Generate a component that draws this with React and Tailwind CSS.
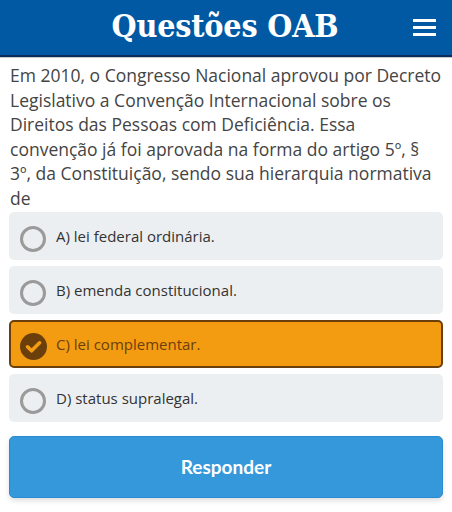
import React from "react";

const options = [
  { letter: "A", text: "lei federal ordinária." },
  { letter: "B", text: "emenda constitucional." },
  { letter: "C", text: "lei complementar.", selected: true },
  { letter: "D", text: "status supralegal." },
];

function Radio() {
  return (
    <div className="w-[26px] h-[26px] shrink-0 rounded-full border-[3.5px] border-[#9a9a9a]" />
  );
}

function Checked() {
  return (
    <svg width="27" height="27" viewBox="0 0 27 27" className="shrink-0">
      <circle cx="13.5" cy="13.5" r="13.5" fill="#6b3f0c" />
      <path d="M7.5 13.8 L11.6 17.8 L19.6 9.8" fill="none" stroke="#f39c12" strokeWidth="3.6" strokeLinecap="round" strokeLinejoin="round" />
    </svg>
  );
}

export default function App() {
  return (
    <div className="w-[452px] h-[512px] bg-white overflow-hidden" style={{ fontFamily: '"Open Sans", sans-serif' }}>
      <header className="h-[57px] bg-[#0059a2] border-b-[2px] border-[#0b2d5e] flex items-center justify-center relative">
        <h1 className="text-white font-bold text-[32px] leading-none tracking-[-0.2px] mt-[-3px] ml-[-2px]" style={{ fontFamily: '"DejaVu Serif Condensed", "DejaVu Serif", serif', fontStretch: "condensed" }}>
          Questões OAB
        </h1>
        <div className="absolute right-[16px] top-[19px] flex flex-col gap-[4px]">
          <div className="w-[23px] h-[3px] bg-white" />
          <div className="w-[23px] h-[3px] bg-white" />
          <div className="w-[23px] h-[3px] bg-white" />
        </div>
      </header>
      <div className="h-[1px] bg-[#c8c8c8]" />
      <div className="px-[9px]">
        <p className="text-[17.5px] leading-[24.5px] text-[#444] pt-[5px] pl-px">
          Em 2010, o Congresso Nacional aprovou por Decreto Legislativo a Convenção Internacional sobre os Direitos das Pessoas com Deficiência. Essa convenção já foi aprovada na forma do artigo 5º, § 3º, da Constituição, sendo sua hierarquia normativa de
        </p>
        <div className="mt-[2px] flex flex-col gap-[6px]">
          {options.map((o) =>
            o.selected ? (
              <div key={o.letter} className="h-[48px] rounded-[5px] bg-[#f39c12] border-[2px] border-[#6b3f0c] flex items-center gap-[9px] pl-[9px]">
                <div className="mt-[4px]"><Checked /></div>
                <span className="text-[15px] text-[#6b3f0c]">{o.letter}) {o.text}</span>
              </div>
            ) : (
              <div key={o.letter} className="h-[48px] rounded-[5px] bg-[#eceff1] flex items-center gap-[10px] pl-[11px]">
                <div className="mt-[5px]"><Radio /></div>
                <span className="text-[15px] text-[#333]">{o.letter}) {o.text}</span>
              </div>
            )
          )}
        </div>
        <button className="mt-[14px] w-full h-[62px] rounded-[5px] bg-[#3498db] border border-[#2a8bd0] shadow-[0_3px_5px_rgba(0,0,0,0.12)] text-white text-[19px] font-bold" style={{ fontFamily: 'Lato, sans-serif' }}>
          Responder
        </button>
      </div>
    </div>
  );
}
